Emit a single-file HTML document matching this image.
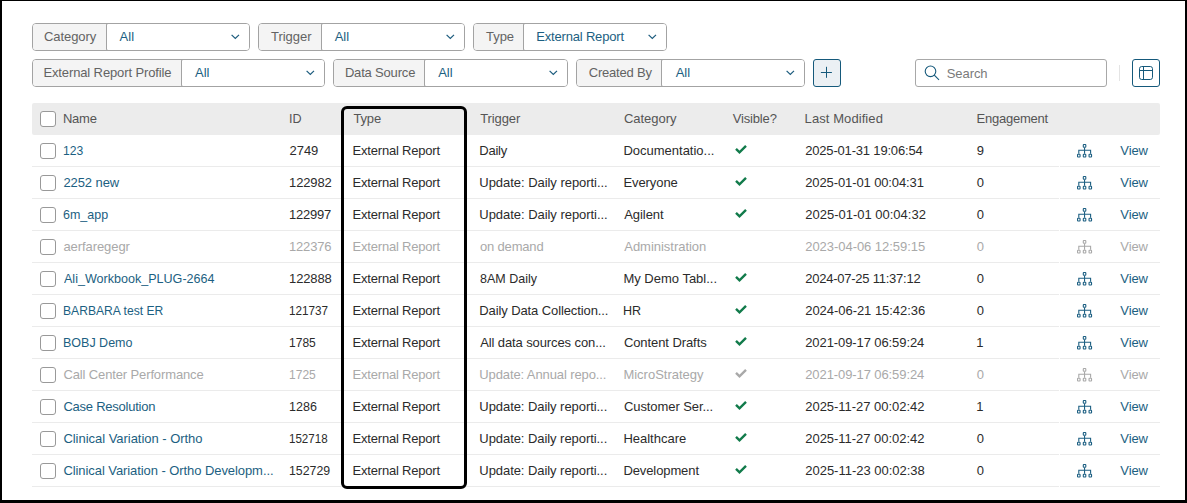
<!DOCTYPE html>
<html><head><meta charset="utf-8">
<style>
*{box-sizing:border-box;margin:0;padding:0}
html,body{width:1187px;height:503px;overflow:hidden;background:#fff}
body{position:relative;font-family:"Liberation Sans",sans-serif;font-size:13px;color:#2b2b2b}
.frame{position:absolute;left:0;top:0;width:1187px;height:503px;border-style:solid;border-color:#000;border-width:1px 2px 3px 2px;z-index:10}
.f{position:absolute;height:28px;border:1px solid #a3a3a3;border-radius:4px;background:#fff;overflow:hidden}
.f .l{position:absolute;left:0;top:0;bottom:0;background:#f4f4f4}
.f .vb{position:absolute;top:-1px;bottom:-1px;right:-1px;border:1px solid #a3a3a3;border-radius:2px;background:#fff}
.chev{position:absolute;top:10px;width:9px;height:6px}
.btn{position:absolute;width:28px;height:28px;border:1.5px solid #15597b;border-radius:3px}
.search{position:absolute;left:915px;top:59px;width:192px;height:28px;border:1px solid #a8a8a8;border-radius:3px}
.hdr{position:absolute;left:32px;top:103px;width:1128px;height:32px;background:#ececec;border-radius:2px}
.t{position:absolute;white-space:nowrap;line-height:16px;z-index:2}
.fl{color:#636363}
.fv{color:#1c5f82}
.sp{color:#7a7a7a}
.h{color:#555}
.lk{color:#1c5f82}
.dis{color:#a9a9a9}
.sep{position:absolute;left:32px;width:1128px;height:1px;background:#ebebeb}
.cb{position:absolute;left:40px;width:16px;height:16px;border:1px solid #999;border-radius:3px;background:#fff}
.ck,.ic{position:absolute}
.hl{position:absolute;left:341px;top:106px;width:126px;height:383px;border:3px solid #000;border-radius:6px;z-index:5}
</style></head><body>
<div class="frame"></div>
<div class="f" style="left:32px;top:23px;width:218px"><div class="l" style="width:74px"></div><div class="vb" style="left:73px"></div><svg class="chev" style="left:197.6px" viewBox="0 0 9 6"><path d="M0.6 0.9 L4.3 4.5 L8.0 0.9" fill="none" stroke="#1b5b7d" stroke-width="1.2"/></svg></div>
<div class="f" style="left:258px;top:23px;width:207px"><div class="l" style="width:63px"></div><div class="vb" style="left:62px"></div><svg class="chev" style="left:186.6px" viewBox="0 0 9 6"><path d="M0.6 0.9 L4.3 4.5 L8.0 0.9" fill="none" stroke="#1b5b7d" stroke-width="1.2"/></svg></div>
<div class="f" style="left:473px;top:23px;width:194px"><div class="l" style="width:50px"></div><div class="vb" style="left:49px"></div><svg class="chev" style="left:173.6px" viewBox="0 0 9 6"><path d="M0.6 0.9 L4.3 4.5 L8.0 0.9" fill="none" stroke="#1b5b7d" stroke-width="1.2"/></svg></div>
<div class="f" style="left:32px;top:59px;width:293px"><div class="l" style="width:149px"></div><div class="vb" style="left:148px"></div><svg class="chev" style="left:272.6px" viewBox="0 0 9 6"><path d="M0.6 0.9 L4.3 4.5 L8.0 0.9" fill="none" stroke="#1b5b7d" stroke-width="1.2"/></svg></div>
<div class="f" style="left:333px;top:59px;width:235px"><div class="l" style="width:91px"></div><div class="vb" style="left:90px"></div><svg class="chev" style="left:214.6px" viewBox="0 0 9 6"><path d="M0.6 0.9 L4.3 4.5 L8.0 0.9" fill="none" stroke="#1b5b7d" stroke-width="1.2"/></svg></div>
<div class="f" style="left:576px;top:59px;width:229px"><div class="l" style="width:85px"></div><div class="vb" style="left:84px"></div><svg class="chev" style="left:208.6px" viewBox="0 0 9 6"><path d="M0.6 0.9 L4.3 4.5 L8.0 0.9" fill="none" stroke="#1b5b7d" stroke-width="1.2"/></svg></div>
<div class="btn" style="left:813px;top:59px;background:#ebf0f4"></div><svg style="position:absolute;left:820px;top:66px" width="13" height="13" viewBox="0 0 13 13"><path d="M6.5 0.8V11.8M0.9 6.5H11.9" stroke="#15597b" stroke-width="1"/></svg>
<div class="search"><svg style="position:absolute;left:7px;top:4px" width="17" height="17" viewBox="0 0 17 17"><circle cx="7.5" cy="7.3" r="5.3" fill="none" stroke="#15597b" stroke-width="1.1"/><path d="M11.3 11.1L16.0 15.9" stroke="#15597b" stroke-width="1.1"/></svg></div>
<div style="position:absolute;left:1119px;top:65px;width:1px;height:16px;background:#e4e4e4"></div>
<div class="btn" style="left:1132px;top:59px;background:#fff"></div><svg style="position:absolute;left:1138px;top:65px" width="17" height="17" viewBox="0 0 17 17"><rect x="1.5" y="1.5" width="13" height="13" rx="2.2" fill="none" stroke="#15597b" stroke-width="1"/><path d="M1.5 5.5H14.5M5.5 1.5V14.5" stroke="#15597b" stroke-width="1"/></svg>
<div class="hdr"></div>
<div class="cb" style="top:111px"></div>
<div class="cb" style="top:143px"></div>
<svg class="ck" style="left:733px;top:144px" width="16" height="12" viewBox="0 0 16 12"><path d="M3 4.8L6.5 8.3L13 1.8" fill="none" stroke="#127b4b" stroke-width="2.4"/></svg>
<svg class="ic" style="left:1077px;top:144px" width="16" height="15" viewBox="0 0 16 15"><g fill="none" stroke="#1c5f82" stroke-width="1.1"><rect x="6.3" y="0.55" width="2.5" height="2.7" rx="0.5"/><path d="M7.55 3.8V9.7M1.8 9.7V6.3H13.6V9.7"/><rect x="0.55" y="10.25" width="2.5" height="2.7" rx="0.5"/><rect x="6.3" y="10.25" width="2.5" height="2.7" rx="0.5"/><rect x="12.05" y="10.25" width="2.5" height="2.7" rx="0.5"/></g></svg>
<div class="sep" style="top:166px"></div><div style="position:absolute;left:1059px;top:166px;width:1px;height:1px;background:#fff"></div>
<div class="cb" style="top:175px"></div>
<svg class="ck" style="left:733px;top:176px" width="16" height="12" viewBox="0 0 16 12"><path d="M3 4.8L6.5 8.3L13 1.8" fill="none" stroke="#127b4b" stroke-width="2.4"/></svg>
<svg class="ic" style="left:1077px;top:176px" width="16" height="15" viewBox="0 0 16 15"><g fill="none" stroke="#1c5f82" stroke-width="1.1"><rect x="6.3" y="0.55" width="2.5" height="2.7" rx="0.5"/><path d="M7.55 3.8V9.7M1.8 9.7V6.3H13.6V9.7"/><rect x="0.55" y="10.25" width="2.5" height="2.7" rx="0.5"/><rect x="6.3" y="10.25" width="2.5" height="2.7" rx="0.5"/><rect x="12.05" y="10.25" width="2.5" height="2.7" rx="0.5"/></g></svg>
<div class="sep" style="top:198px"></div><div style="position:absolute;left:1059px;top:198px;width:1px;height:1px;background:#fff"></div>
<div class="cb" style="top:207px"></div>
<svg class="ck" style="left:733px;top:208px" width="16" height="12" viewBox="0 0 16 12"><path d="M3 4.8L6.5 8.3L13 1.8" fill="none" stroke="#127b4b" stroke-width="2.4"/></svg>
<svg class="ic" style="left:1077px;top:208px" width="16" height="15" viewBox="0 0 16 15"><g fill="none" stroke="#1c5f82" stroke-width="1.1"><rect x="6.3" y="0.55" width="2.5" height="2.7" rx="0.5"/><path d="M7.55 3.8V9.7M1.8 9.7V6.3H13.6V9.7"/><rect x="0.55" y="10.25" width="2.5" height="2.7" rx="0.5"/><rect x="6.3" y="10.25" width="2.5" height="2.7" rx="0.5"/><rect x="12.05" y="10.25" width="2.5" height="2.7" rx="0.5"/></g></svg>
<div class="sep" style="top:230px"></div><div style="position:absolute;left:1059px;top:230px;width:1px;height:1px;background:#fff"></div>
<div class="cb" style="top:239px"></div>
<svg class="ic" style="left:1077px;top:240px" width="16" height="15" viewBox="0 0 16 15"><g fill="none" stroke="#a9a9a9" stroke-width="1.1"><rect x="6.3" y="0.55" width="2.5" height="2.7" rx="0.5"/><path d="M7.55 3.8V9.7M1.8 9.7V6.3H13.6V9.7"/><rect x="0.55" y="10.25" width="2.5" height="2.7" rx="0.5"/><rect x="6.3" y="10.25" width="2.5" height="2.7" rx="0.5"/><rect x="12.05" y="10.25" width="2.5" height="2.7" rx="0.5"/></g></svg>
<div class="sep" style="top:262px"></div><div style="position:absolute;left:1059px;top:262px;width:1px;height:1px;background:#fff"></div>
<div class="cb" style="top:271px"></div>
<svg class="ck" style="left:733px;top:272px" width="16" height="12" viewBox="0 0 16 12"><path d="M3 4.8L6.5 8.3L13 1.8" fill="none" stroke="#127b4b" stroke-width="2.4"/></svg>
<svg class="ic" style="left:1077px;top:272px" width="16" height="15" viewBox="0 0 16 15"><g fill="none" stroke="#1c5f82" stroke-width="1.1"><rect x="6.3" y="0.55" width="2.5" height="2.7" rx="0.5"/><path d="M7.55 3.8V9.7M1.8 9.7V6.3H13.6V9.7"/><rect x="0.55" y="10.25" width="2.5" height="2.7" rx="0.5"/><rect x="6.3" y="10.25" width="2.5" height="2.7" rx="0.5"/><rect x="12.05" y="10.25" width="2.5" height="2.7" rx="0.5"/></g></svg>
<div class="sep" style="top:294px"></div><div style="position:absolute;left:1059px;top:294px;width:1px;height:1px;background:#fff"></div>
<div class="cb" style="top:303px"></div>
<svg class="ck" style="left:733px;top:304px" width="16" height="12" viewBox="0 0 16 12"><path d="M3 4.8L6.5 8.3L13 1.8" fill="none" stroke="#127b4b" stroke-width="2.4"/></svg>
<svg class="ic" style="left:1077px;top:304px" width="16" height="15" viewBox="0 0 16 15"><g fill="none" stroke="#1c5f82" stroke-width="1.1"><rect x="6.3" y="0.55" width="2.5" height="2.7" rx="0.5"/><path d="M7.55 3.8V9.7M1.8 9.7V6.3H13.6V9.7"/><rect x="0.55" y="10.25" width="2.5" height="2.7" rx="0.5"/><rect x="6.3" y="10.25" width="2.5" height="2.7" rx="0.5"/><rect x="12.05" y="10.25" width="2.5" height="2.7" rx="0.5"/></g></svg>
<div class="sep" style="top:326px"></div><div style="position:absolute;left:1059px;top:326px;width:1px;height:1px;background:#fff"></div>
<div class="cb" style="top:335px"></div>
<svg class="ck" style="left:733px;top:336px" width="16" height="12" viewBox="0 0 16 12"><path d="M3 4.8L6.5 8.3L13 1.8" fill="none" stroke="#127b4b" stroke-width="2.4"/></svg>
<svg class="ic" style="left:1077px;top:336px" width="16" height="15" viewBox="0 0 16 15"><g fill="none" stroke="#1c5f82" stroke-width="1.1"><rect x="6.3" y="0.55" width="2.5" height="2.7" rx="0.5"/><path d="M7.55 3.8V9.7M1.8 9.7V6.3H13.6V9.7"/><rect x="0.55" y="10.25" width="2.5" height="2.7" rx="0.5"/><rect x="6.3" y="10.25" width="2.5" height="2.7" rx="0.5"/><rect x="12.05" y="10.25" width="2.5" height="2.7" rx="0.5"/></g></svg>
<div class="sep" style="top:358px"></div><div style="position:absolute;left:1059px;top:358px;width:1px;height:1px;background:#fff"></div>
<div class="cb" style="top:367px"></div>
<svg class="ck" style="left:733px;top:368px" width="16" height="12" viewBox="0 0 16 12"><path d="M3 4.8L6.5 8.3L13 1.8" fill="none" stroke="#a9a9a9" stroke-width="2.4"/></svg>
<svg class="ic" style="left:1077px;top:368px" width="16" height="15" viewBox="0 0 16 15"><g fill="none" stroke="#a9a9a9" stroke-width="1.1"><rect x="6.3" y="0.55" width="2.5" height="2.7" rx="0.5"/><path d="M7.55 3.8V9.7M1.8 9.7V6.3H13.6V9.7"/><rect x="0.55" y="10.25" width="2.5" height="2.7" rx="0.5"/><rect x="6.3" y="10.25" width="2.5" height="2.7" rx="0.5"/><rect x="12.05" y="10.25" width="2.5" height="2.7" rx="0.5"/></g></svg>
<div class="sep" style="top:390px"></div><div style="position:absolute;left:1059px;top:390px;width:1px;height:1px;background:#fff"></div>
<div class="cb" style="top:399px"></div>
<svg class="ck" style="left:733px;top:400px" width="16" height="12" viewBox="0 0 16 12"><path d="M3 4.8L6.5 8.3L13 1.8" fill="none" stroke="#127b4b" stroke-width="2.4"/></svg>
<svg class="ic" style="left:1077px;top:400px" width="16" height="15" viewBox="0 0 16 15"><g fill="none" stroke="#1c5f82" stroke-width="1.1"><rect x="6.3" y="0.55" width="2.5" height="2.7" rx="0.5"/><path d="M7.55 3.8V9.7M1.8 9.7V6.3H13.6V9.7"/><rect x="0.55" y="10.25" width="2.5" height="2.7" rx="0.5"/><rect x="6.3" y="10.25" width="2.5" height="2.7" rx="0.5"/><rect x="12.05" y="10.25" width="2.5" height="2.7" rx="0.5"/></g></svg>
<div class="sep" style="top:422px"></div><div style="position:absolute;left:1059px;top:422px;width:1px;height:1px;background:#fff"></div>
<div class="cb" style="top:431px"></div>
<svg class="ck" style="left:733px;top:432px" width="16" height="12" viewBox="0 0 16 12"><path d="M3 4.8L6.5 8.3L13 1.8" fill="none" stroke="#127b4b" stroke-width="2.4"/></svg>
<svg class="ic" style="left:1077px;top:432px" width="16" height="15" viewBox="0 0 16 15"><g fill="none" stroke="#1c5f82" stroke-width="1.1"><rect x="6.3" y="0.55" width="2.5" height="2.7" rx="0.5"/><path d="M7.55 3.8V9.7M1.8 9.7V6.3H13.6V9.7"/><rect x="0.55" y="10.25" width="2.5" height="2.7" rx="0.5"/><rect x="6.3" y="10.25" width="2.5" height="2.7" rx="0.5"/><rect x="12.05" y="10.25" width="2.5" height="2.7" rx="0.5"/></g></svg>
<div class="sep" style="top:454px"></div><div style="position:absolute;left:1059px;top:454px;width:1px;height:1px;background:#fff"></div>
<div class="cb" style="top:463px"></div>
<svg class="ck" style="left:733px;top:464px" width="16" height="12" viewBox="0 0 16 12"><path d="M3 4.8L6.5 8.3L13 1.8" fill="none" stroke="#127b4b" stroke-width="2.4"/></svg>
<svg class="ic" style="left:1077px;top:464px" width="16" height="15" viewBox="0 0 16 15"><g fill="none" stroke="#1c5f82" stroke-width="1.1"><rect x="6.3" y="0.55" width="2.5" height="2.7" rx="0.5"/><path d="M7.55 3.8V9.7M1.8 9.7V6.3H13.6V9.7"/><rect x="0.55" y="10.25" width="2.5" height="2.7" rx="0.5"/><rect x="6.3" y="10.25" width="2.5" height="2.7" rx="0.5"/><rect x="12.05" y="10.25" width="2.5" height="2.7" rx="0.5"/></g></svg>
<div class="sep" style="top:486px"></div><div style="position:absolute;left:1059px;top:486px;width:1px;height:1px;background:#fff"></div>
<div class="t fl" style="left:43.91px;top:29px;letter-spacing:-0.045px">Category</div>
<div class="t fv" style="left:119.57px;top:29px;letter-spacing:0.123px">All</div>
<div class="t fl" style="left:270.94px;top:29px;letter-spacing:-0.014px">Trigger</div>
<div class="t fv" style="left:334.67px;top:29px;letter-spacing:0.000px">All</div>
<div class="t fl" style="left:485.94px;top:29px;letter-spacing:-0.012px">Type</div>
<div class="t fv" style="left:536.22px;top:29px;letter-spacing:-0.179px">External Report</div>
<div class="t fl" style="left:43.42px;top:65px;letter-spacing:-0.121px">External Report Profile</div>
<div class="t fv" style="left:195.07px;top:65px;letter-spacing:0.000px">All</div>
<div class="t fl" style="left:344.92px;top:65px;letter-spacing:-0.181px">Data Source</div>
<div class="t fv" style="left:438.17px;top:65px;letter-spacing:0.000px">All</div>
<div class="t fl" style="left:588.71px;top:65px;letter-spacing:-0.197px">Created By</div>
<div class="t fv" style="left:675.67px;top:65px;letter-spacing:0.000px">All</div>
<div class="t sp" style="left:946.73px;top:66px;letter-spacing:-0.061px">Search</div>
<div class="t h" style="left:62.92px;top:111px;letter-spacing:-0.224px">Name</div>
<div class="t h" style="left:288.84px;top:111px;letter-spacing:0.000px;transform:scaleX(0.9679);transform-origin:0 0">ID</div>
<div class="t h" style="left:353.44px;top:111px;letter-spacing:-0.146px">Type</div>
<div class="t h" style="left:480.14px;top:111px;letter-spacing:-0.081px">Trigger</div>
<div class="t h" style="left:623.91px;top:111px;letter-spacing:-0.031px">Category</div>
<div class="t h" style="left:732.75px;top:111px;letter-spacing:-0.169px">Visible?</div>
<div class="t h" style="left:804.62px;top:111px;letter-spacing:0.078px">Last Modified</div>
<div class="t h" style="left:976.52px;top:111px;letter-spacing:-0.234px">Engagement</div>
<div class="t lk" style="left:63.06px;top:143px;letter-spacing:0.000px;transform:scaleX(0.9340);transform-origin:0 0">123</div>
<div class="t " style="left:289.52px;top:143px;letter-spacing:-0.047px">2749</div>
<div class="t " style="left:352.62px;top:143px;letter-spacing:-0.208px">External Report</div>
<div class="t " style="left:479.32px;top:143px;letter-spacing:-0.243px">Daily</div>
<div class="t " style="left:623.42px;top:143px;letter-spacing:-0.003px">Documentatio...</div>
<div class="t " style="left:805.22px;top:143px;letter-spacing:-0.181px">2025-01-31 19:06:54</div>
<div class="t " style="left:976.71px;top:143px;letter-spacing:0.000px">9</div>
<div class="t lk" style="left:1120.35px;top:143px;letter-spacing:-0.099px">View</div>
<div class="t lk" style="left:63.42px;top:175px;letter-spacing:-0.086px">2252 new</div>
<div class="t " style="left:289.08px;top:175px;letter-spacing:-0.144px">122982</div>
<div class="t " style="left:352.62px;top:175px;letter-spacing:-0.208px">External Report</div>
<div class="t " style="left:479.32px;top:175px;letter-spacing:-0.040px">Update: Daily reporti...</div>
<div class="t " style="left:623.42px;top:175px;letter-spacing:-0.081px">Everyone</div>
<div class="t " style="left:805.22px;top:175px;letter-spacing:-0.109px">2025-01-01 00:04:31</div>
<div class="t " style="left:976.82px;top:175px;letter-spacing:0.000px">0</div>
<div class="t lk" style="left:1120.35px;top:175px;letter-spacing:-0.099px">View</div>
<div class="t lk" style="left:63.44px;top:207px;letter-spacing:0.000px;transform:scaleX(0.9603);transform-origin:0 0">6m_app</div>
<div class="t " style="left:289.08px;top:207px;letter-spacing:-0.224px">122997</div>
<div class="t " style="left:352.62px;top:207px;letter-spacing:-0.208px">External Report</div>
<div class="t " style="left:479.32px;top:207px;letter-spacing:-0.040px">Update: Daily reporti...</div>
<div class="t " style="left:624.27px;top:207px;letter-spacing:-0.078px">Agilent</div>
<div class="t " style="left:805.22px;top:207px;letter-spacing:-0.002px">2025-01-01 00:04:32</div>
<div class="t " style="left:976.82px;top:207px;letter-spacing:0.000px">0</div>
<div class="t lk" style="left:1120.35px;top:207px;letter-spacing:-0.099px">View</div>
<div class="t dis" style="left:63.47px;top:239px;letter-spacing:-0.082px">aerfaregegr</div>
<div class="t dis" style="left:289.08px;top:239px;letter-spacing:-0.213px">122376</div>
<div class="t dis" style="left:352.62px;top:239px;letter-spacing:-0.208px">External Report</div>
<div class="t dis" style="left:479.89px;top:239px;letter-spacing:-0.156px">on demand</div>
<div class="t dis" style="left:624.27px;top:239px;letter-spacing:-0.027px">Administration</div>
<div class="t dis" style="left:805.22px;top:239px;letter-spacing:-0.042px">2023-04-06 12:59:15</div>
<div class="t dis" style="left:976.82px;top:239px;letter-spacing:0.000px">0</div>
<div class="t dis" style="left:1120.35px;top:239px;letter-spacing:-0.099px">View</div>
<div class="t lk" style="left:63.79px;top:271px;letter-spacing:0.000px;transform:scaleX(0.9657);transform-origin:0 0">Ali_Workbook_PLUG-2664</div>
<div class="t " style="left:289.08px;top:271px;letter-spacing:-0.136px">122888</div>
<div class="t " style="left:352.62px;top:271px;letter-spacing:-0.208px">External Report</div>
<div class="t " style="left:479.89px;top:271px;letter-spacing:0.000px;transform:scaleX(0.9611);transform-origin:0 0">8AM Daily</div>
<div class="t " style="left:623.42px;top:271px;letter-spacing:-0.001px">My Demo Tabl...</div>
<div class="t " style="left:805.22px;top:271px;letter-spacing:-0.241px">2024-07-25 11:37:12</div>
<div class="t " style="left:976.82px;top:271px;letter-spacing:0.000px">0</div>
<div class="t lk" style="left:1120.35px;top:271px;letter-spacing:-0.099px">View</div>
<div class="t lk" style="left:63.00px;top:303px;letter-spacing:0.000px;transform:scaleX(0.9313);transform-origin:0 0">BARBARA test ER</div>
<div class="t " style="left:289.19px;top:303px;letter-spacing:0.000px;transform:scaleX(0.9012);transform-origin:0 0">121737</div>
<div class="t " style="left:352.62px;top:303px;letter-spacing:-0.208px">External Report</div>
<div class="t " style="left:479.32px;top:303px;letter-spacing:-0.105px">Daily Data Collection...</div>
<div class="t " style="left:623.46px;top:303px;letter-spacing:0.000px;transform:scaleX(0.9649);transform-origin:0 0">HR</div>
<div class="t " style="left:805.22px;top:303px;letter-spacing:-0.041px">2024-06-21 15:42:36</div>
<div class="t " style="left:976.82px;top:303px;letter-spacing:0.000px">0</div>
<div class="t lk" style="left:1120.35px;top:303px;letter-spacing:-0.099px">View</div>
<div class="t lk" style="left:62.96px;top:335px;letter-spacing:0.000px;transform:scaleX(0.9616);transform-origin:0 0">BOBJ Demo</div>
<div class="t " style="left:289.17px;top:335px;letter-spacing:0.000px;transform:scaleX(0.9259);transform-origin:0 0">1785</div>
<div class="t " style="left:352.62px;top:335px;letter-spacing:-0.208px">External Report</div>
<div class="t " style="left:480.17px;top:335px;letter-spacing:-0.104px">All data sources con...</div>
<div class="t " style="left:623.91px;top:335px;letter-spacing:-0.080px">Content Drafts</div>
<div class="t " style="left:805.22px;top:335px;letter-spacing:-0.092px">2021-09-17 06:59:24</div>
<div class="t " style="left:976.28px;top:335px;letter-spacing:0.000px">1</div>
<div class="t lk" style="left:1120.35px;top:335px;letter-spacing:-0.099px">View</div>
<div class="t dis" style="left:63.41px;top:367px;letter-spacing:-0.126px">Call Center Performance</div>
<div class="t dis" style="left:289.17px;top:367px;letter-spacing:0.000px;transform:scaleX(0.9259);transform-origin:0 0">1725</div>
<div class="t dis" style="left:352.62px;top:367px;letter-spacing:-0.208px">External Report</div>
<div class="t dis" style="left:479.32px;top:367px;letter-spacing:-0.110px">Update: Annual repo...</div>
<div class="t dis" style="left:623.42px;top:367px;letter-spacing:-0.002px">MicroStrategy</div>
<div class="t dis" style="left:805.22px;top:367px;letter-spacing:-0.092px">2021-09-17 06:59:24</div>
<div class="t dis" style="left:976.82px;top:367px;letter-spacing:0.000px">0</div>
<div class="t dis" style="left:1120.35px;top:367px;letter-spacing:-0.099px">View</div>
<div class="t lk" style="left:63.41px;top:399px;letter-spacing:-0.235px">Case Resolution</div>
<div class="t " style="left:289.12px;top:399px;letter-spacing:0.000px;transform:scaleX(0.9632);transform-origin:0 0">1286</div>
<div class="t " style="left:352.62px;top:399px;letter-spacing:-0.208px">External Report</div>
<div class="t " style="left:479.32px;top:399px;letter-spacing:-0.061px">Update: Daily reporti...</div>
<div class="t " style="left:623.91px;top:399px;letter-spacing:-0.072px">Customer Ser...</div>
<div class="t " style="left:805.22px;top:399px;letter-spacing:-0.024px">2025-11-27 00:02:42</div>
<div class="t " style="left:976.28px;top:399px;letter-spacing:0.000px">1</div>
<div class="t lk" style="left:1120.35px;top:399px;letter-spacing:-0.099px">View</div>
<div class="t lk" style="left:63.41px;top:431px;letter-spacing:-0.032px">Clinical Variation - Ortho</div>
<div class="t " style="left:289.21px;top:431px;letter-spacing:0.000px;transform:scaleX(0.8901);transform-origin:0 0">152718</div>
<div class="t " style="left:352.62px;top:431px;letter-spacing:-0.208px">External Report</div>
<div class="t " style="left:479.32px;top:431px;letter-spacing:-0.061px">Update: Daily reporti...</div>
<div class="t " style="left:623.42px;top:431px;letter-spacing:-0.007px">Healthcare</div>
<div class="t " style="left:805.22px;top:431px;letter-spacing:-0.024px">2025-11-27 00:02:42</div>
<div class="t " style="left:976.82px;top:431px;letter-spacing:0.000px">0</div>
<div class="t lk" style="left:1120.35px;top:431px;letter-spacing:-0.099px">View</div>
<div class="t lk" style="left:63.41px;top:463px;letter-spacing:-0.074px">Clinical Variation - Ortho Developm...</div>
<div class="t " style="left:289.14px;top:463px;letter-spacing:0.000px;transform:scaleX(0.9493);transform-origin:0 0">152729</div>
<div class="t " style="left:352.62px;top:463px;letter-spacing:-0.208px">External Report</div>
<div class="t " style="left:479.32px;top:463px;letter-spacing:-0.061px">Update: Daily reporti...</div>
<div class="t " style="left:623.42px;top:463px;letter-spacing:-0.101px">Development</div>
<div class="t " style="left:805.22px;top:463px;letter-spacing:-0.010px">2025-11-23 00:02:38</div>
<div class="t " style="left:976.82px;top:463px;letter-spacing:0.000px">0</div>
<div class="t lk" style="left:1120.35px;top:463px;letter-spacing:-0.099px">View</div>
<div class="hl"></div>
</body></html>
